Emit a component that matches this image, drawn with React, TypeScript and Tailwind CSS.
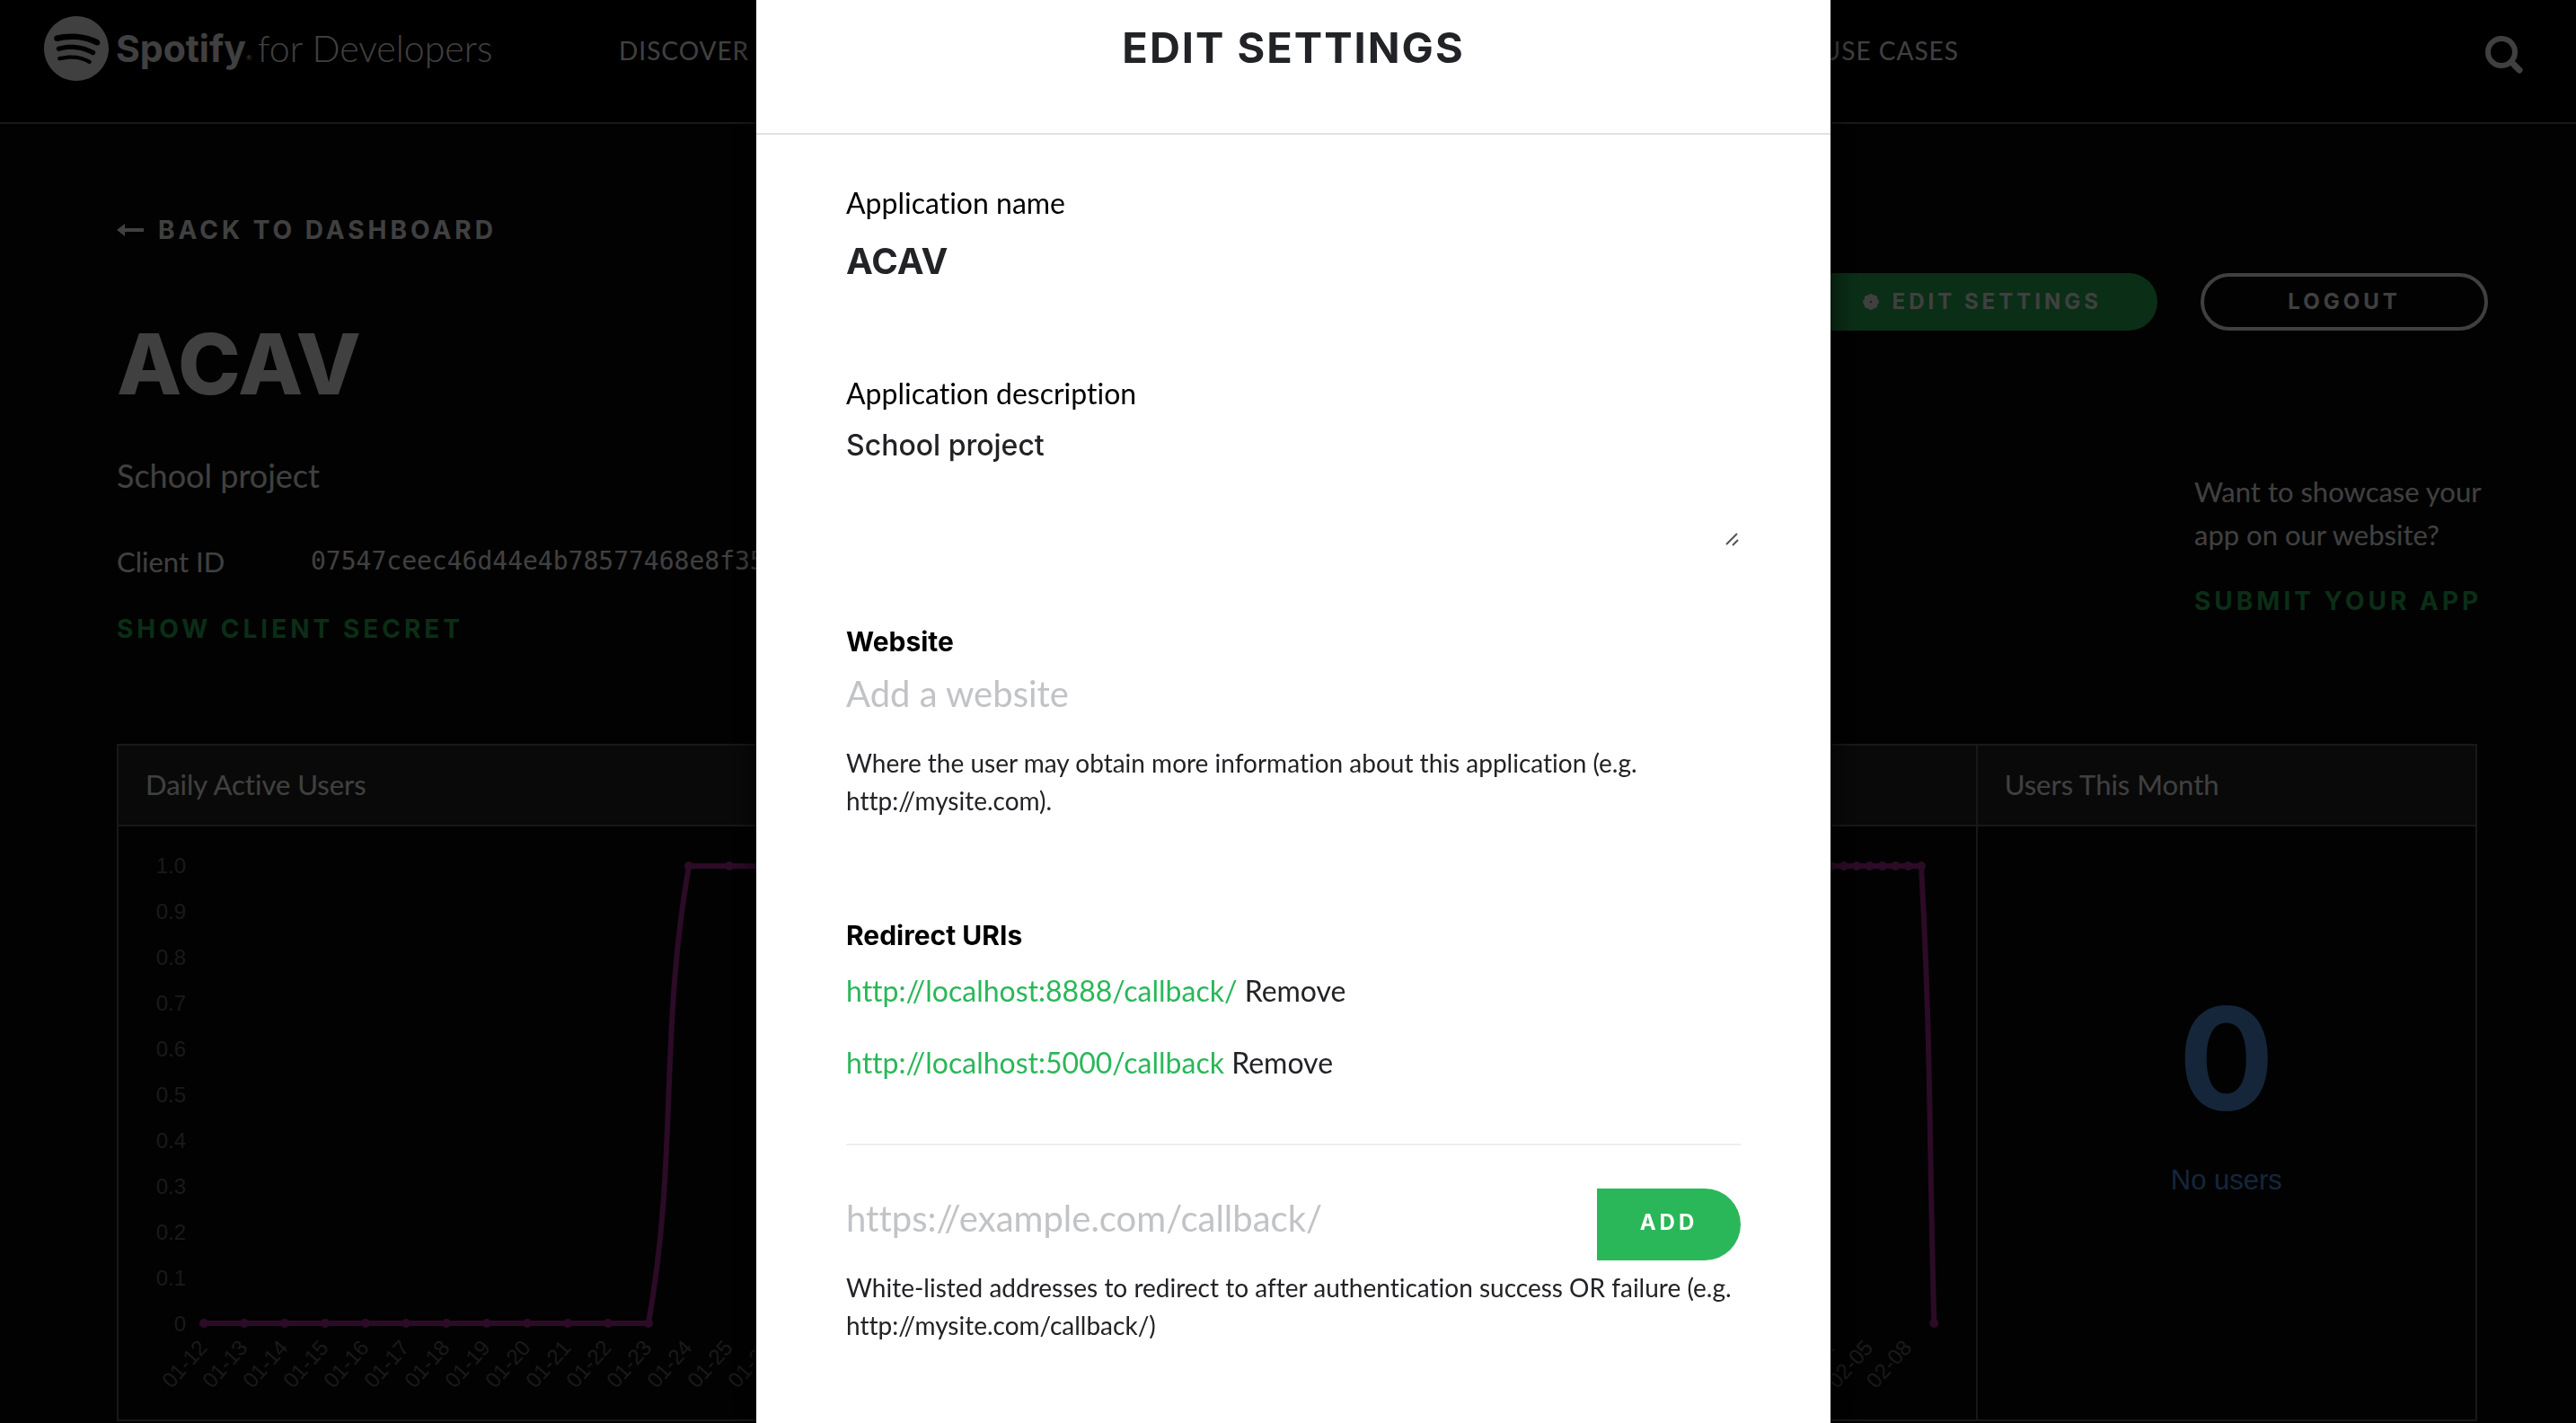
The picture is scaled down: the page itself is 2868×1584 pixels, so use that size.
import { SiSpotify } from "react-icons/si";

const navItems = ["DISCOVER", "DOCS", "CONSOLE", "COMMUNITY", "DASHBOARD", "USE CASES"];

const PLOT_TOP = 44;
const PLOT_BOTTOM = 553;
const LEFT = 95;

const yTicks = ["0", "0.1", "0.2", "0.3", "0.4", "0.5", "0.6", "0.7", "0.8", "0.9", "1.0"];

type Point = { x: number; y: number };

function dayLabel(offset: number) {
  const date = new Date(Date.UTC(2021, 0, 12 + offset));
  return date.toISOString().slice(5, 10);
}

/* Smoothed path with control points kept inside the plot area. */
function smoothPath(points: Point[]) {
  const clamp = (y: number) => Math.min(PLOT_BOTTOM, Math.max(PLOT_TOP, y));
  const controls = points.map((p, i) => {
    const prev = points[i - 1] ?? p;
    const next = points[i + 1] ?? p;
    const before = Math.hypot(p.x - prev.x, p.y - prev.y);
    const after = Math.hypot(next.x - p.x, next.y - p.y);
    const total = before + after || 1;
    const a = (0.4 * before) / total;
    const b = (0.4 * after) / total;
    return {
      inX: p.x - a * (next.x - prev.x),
      inY: clamp(p.y - a * (next.y - prev.y)),
      outX: p.x + b * (next.x - prev.x),
      outY: clamp(p.y + b * (next.y - prev.y)),
    };
  });
  return points
    .map((p, i) =>
      i === 0
        ? `M${p.x} ${p.y}`
        : `C${controls[i - 1].outX} ${controls[i - 1].outY} ${controls[i].inX} ${controls[i].inY} ${p.x} ${p.y}`,
    )
    .join(" ");
}

function LineChart({
  values,
  step,
  labelEvery,
  labelStart,
  name,
}: {
  values: number[];
  step: number;
  labelEvery: number;
  labelStart: number;
  name: string;
}) {
  const points = values.map((v, i) => ({
    x: LEFT + i * step,
    y: PLOT_BOTTOM - v * (PLOT_BOTTOM - PLOT_TOP),
  }));
  return (
    <svg className="block h-[660px] w-full" role="img" aria-label={name}>
      <g fill="#666" fontFamily="Liberation Sans, Arial, sans-serif" fontSize="24">
        {yTicks.map((t, i) => (
          <text key={t} x="75" y={PLOT_BOTTOM - i * 51 + 9} textAnchor="end">
            {t}
          </text>
        ))}
        {points.map((p, i) =>
          i % labelEvery === 0 ? (
            <text
              key={i}
              x={p.x + 5}
              y="581"
              textAnchor="end"
              transform={`rotate(-48 ${p.x + 5} 581)`}
            >
              {dayLabel(labelStart + i)}
            </text>
          ) : null,
        )}
      </g>
      <path d={smoothPath(points)} fill="none" stroke="#ae2d9c" strokeWidth="6" />
      {points.map((p, i) => (
        <circle key={i} cx={p.x} cy={p.y} r="5" fill="#ae2d9c" />
      ))}
    </svg>
  );
}

function ArrowLeft() {
  return (
    <svg width="30" height="14" viewBox="0 0 30 14" fill="currentColor" aria-hidden="true">
      <path d="M0 7 9 0V5H30V9H9V14Z" />
    </svg>
  );
}

function Gear() {
  const lobes = [0, 45, 90, 135, 180, 225, 270, 315];
  return (
    <svg width="20" height="20" viewBox="-10 -10 20 20" fill="currentColor" aria-hidden="true">
      <path
        fillRule="evenodd"
        d="M0-7.600A7.600 7.600 0 1 1 0 7.600A7.600 7.600 0 1 1 0-7.600ZM0-1.300A1.300 1.300 0 1 0 0 1.300A1.300 1.300 0 1 0 0-1.300Z"
      />
      {lobes.map((a) => (
        <circle key={a} cx="0" cy="-6" r="3" transform={`rotate(${a})`} />
      ))}
    </svg>
  );
}

function Card({ title, children }: { title: string; children: React.ReactNode }) {
  return (
    <section className="min-w-0 border-l-2 border-[#5f5f5f] first:border-l-0">
      <h2 className="flex h-[90px] items-center border-b-2 border-[#5f5f5f] bg-[#242424] px-[30px] pb-0.5 text-[31px]">
        {title}
      </h2>
      {children}
    </section>
  );
}

function Page() {
  const daily = Array.from({ length: 21 }, (_, i) => (i < 12 ? 0 : 1));
  const monthly = Array.from({ length: 63 }, (_, i) => (i < 35 || i === 62 ? 0 : 1));
  return (
    <div className="min-h-screen bg-[#080808] text-white">
      <header className="border-b-2 border-[#666] bg-black pb-6">
        <div className="flex h-28 items-center">
          <a href="#home" className="flex w-[648px] shrink-0 items-center pb-1 pl-[49px]">
            <SiSpotify className="size-[72px]" aria-hidden="true" />
            <span className="ml-2 font-['Inter'] text-[41px] leading-[48px] font-bold">Spotify</span>
            <span className="pt-5 text-[8px] leading-[10px]">®</span>
            <span className="ml-1.5 text-[41px] leading-[48px] font-light">for Developers</span>
          </a>
          <nav className="flex flex-1 justify-between pl-[41px] text-[28px] tracking-[1px]">
            {navItems.map((n) => (
              <a key={n} href={`#${n.toLowerCase().replace(" ", "-")}`} className="whitespace-nowrap">
                {n}
              </a>
            ))}
          </nav>
          <div className="flex w-[687px] shrink-0 justify-end pt-2.5 pr-[58px]">
            <button type="button" aria-label="Search">
              <svg width="44" height="44" viewBox="0 0 44 44" fill="none" stroke="currentColor" aria-hidden="true">
                <circle cx="19" cy="19" r="15" strokeWidth="6" />
                <path d="M30 30 39 39" strokeWidth="7" strokeLinecap="round" />
              </svg>
            </button>
          </div>
        </div>
      </header>

      <main>
        <div className="flex justify-between pr-[98px] pl-[130px]">
          <div className="flex flex-col items-start pt-[98px]">
            <a
              href="#dashboard"
              className="flex items-center gap-4 font-['Inter'] text-[28px] leading-10 font-bold tracking-[4px]"
            >
              <ArrowLeft />
              BACK TO DASHBOARD
            </a>
            <h1 className="mt-[73px] font-['Inter'] text-[94px] leading-28 font-extrabold">ACAV</h1>
            <p className="mt-11 text-[36px] leading-12">School project</p>
            <dl className="mt-[52px] flex items-center text-[31px] leading-10">
              <dt className="w-[216px]">Client ID</dt>
              <dd className="font-['DejaVu_Sans_Mono'] text-[28px]">07547ceec46d44e4b78577468e8f3542</dd>
            </dl>
            <button
              type="button"
              className="mt-[35px] font-['Inter'] text-[28px] leading-10 font-bold tracking-[4px] text-[#2ab759]"
            >
              SHOW CLIENT SECRET
            </button>
          </div>

          <div className="flex flex-col items-end pt-[166px]">
            <div className="flex gap-12 font-['Inter'] text-[24px] font-bold tracking-[4px]">
              <button
                type="button"
                className="flex h-16 items-center gap-3.5 rounded-full bg-[#2ab759] pr-[62px] pl-[68px]"
              >
                <Gear />
                EDIT SETTINGS
              </button>
              <button type="button" className="h-16 w-[320px] rounded-full border-4 border-white">
                LOGOUT
              </button>
            </div>
            <div className="mt-[155px] w-[327px] whitespace-nowrap">
              <p className="text-[31px] leading-12">
                Want to showcase your
                <br />
                app on our website?
              </p>
              <a
                href="#submit"
                className="mt-[30px] block font-['Inter'] text-[28px] leading-10 font-bold tracking-[4px] text-[#2ab759]"
              >
                SUBMIT YOUR APP
              </a>
            </div>
          </div>
        </div>

        <div className="mt-[108px] mr-[110px] ml-[130px] grid grid-cols-[1035fr_1035fr_557fr] border-2 border-[#5f5f5f]">
          <Card title="Daily Active Users">
            <LineChart name="Daily active users" values={daily} step={45} labelEvery={1} labelStart={0} />
          </Card>
          <Card title="Monthly Active Users">
            <LineChart name="Monthly active users" values={monthly} step={14.36} labelEvery={3} labelStart={-33} />
          </Card>
          <Card title="Users This Month">
            <div className="flex flex-col items-center pt-[176px] text-[#5498ec]">
              <strong className="font-['Inter'] text-[158px] leading-[164px] font-bold">0</strong>
              <span className="mt-[34px] font-['Liberation_Sans'] text-[31px] leading-10">No users</span>
            </div>
          </Card>
        </div>
      </main>
    </div>
  );
}

function EditSettings() {
  return (
    <div className="fixed inset-0 flex justify-center overflow-hidden bg-black/75 pl-3">
      <div
        role="dialog"
        aria-modal="true"
        aria-labelledby="dialog-title"
        className="min-h-full w-[1196px] bg-white text-[#222326] shadow-[0_0_30px_rgba(0,0,0,0.8)]"
      >
        <div className="border-b-2 border-[#e1e1e3] pt-6 pb-[66px] text-center">
          <h2
            id="dialog-title"
            className="font-['Inter'] text-[47px] leading-[58px] font-bold tracking-[2px]"
          >
            EDIT SETTINGS
          </h2>
        </div>
        <form className="flex flex-col px-[100px] pt-14">
          <label htmlFor="name" className="text-[32px] leading-10 text-black">
            Application name
          </label>
          <input
            id="name"
            defaultValue="ACAV"
            className="mt-5 h-[50px] font-['Inter'] text-[40px] font-bold outline-none"
          />

          <label htmlFor="description" className="mt-[102px] text-[32px] leading-10 text-black">
            Application description
          </label>
          <div className="relative mt-3.5">
            <textarea
              id="description"
              defaultValue="School project"
              className="block h-[136px] w-full resize-none font-['Inter'] text-[32px] leading-12 font-medium outline-none"
            />
            <svg
              className="pointer-events-none absolute right-0.5 bottom-0"
              width="16"
              height="16"
              viewBox="0 0 16 16"
              stroke="#555"
              strokeWidth="2"
              aria-hidden="true"
            >
              <path d="M2 14 14 2M9 15 15 9" />
            </svg>
          </div>

          <label htmlFor="website" className="mt-[86px] font-['Inter'] text-[30px] leading-10 font-bold text-black">
            Website
          </label>
          <input
            id="website"
            placeholder="Add a website"
            className="mt-2.5 h-14 text-[40px] outline-none placeholder:text-[#c1c3c6]"
          />
          <p className="mt-7 text-[28px] leading-[42px]">
            Where the user may obtain more information about this application (e.g. http://mysite.com).
          </p>

          <label htmlFor="redirect" className="mt-[109px] font-['Inter'] text-[30px] leading-10 font-bold text-black">
            Redirect URIs
          </label>
          <ul className="mt-[18px] flex flex-col gap-8 text-[32px] leading-12">
            {["http://localhost:8888/callback/", "http://localhost:5000/callback"].map((uri) => (
              <li key={uri}>
                <a href={uri} className="text-[#2ab759]">
                  {uri}
                </a>{" "}
                <button type="button">Remove</button>
              </li>
            ))}
          </ul>
          <div className="mt-[66px] flex items-start border-t-2 border-[#eeeeef] pt-12">
            <input
              id="redirect"
              placeholder="https://example.com/callback/"
              className="h-[66px] min-w-0 flex-1 text-[40px] outline-none placeholder:text-[#c1c3c6]"
            />
            <button
              type="button"
              className="h-20 w-40 rounded-r-full bg-[#2ab759] pb-1 font-['Inter'] text-[24px] font-bold tracking-[4px] text-white"
            >
              ADD
            </button>
          </div>
          <p className="mt-[9px] text-[28px] leading-[42px]">
            White-listed addresses to redirect to after authentication success OR failure (e.g.
            http://mysite.com/callback/)
          </p>
        </form>
      </div>
    </div>
  );
}

export default function App() {
  return (
    <div className="font-['Lato',sans-serif] [font-variant-ligatures:none]">
      <Page />
      <EditSettings />
    </div>
  );
}
